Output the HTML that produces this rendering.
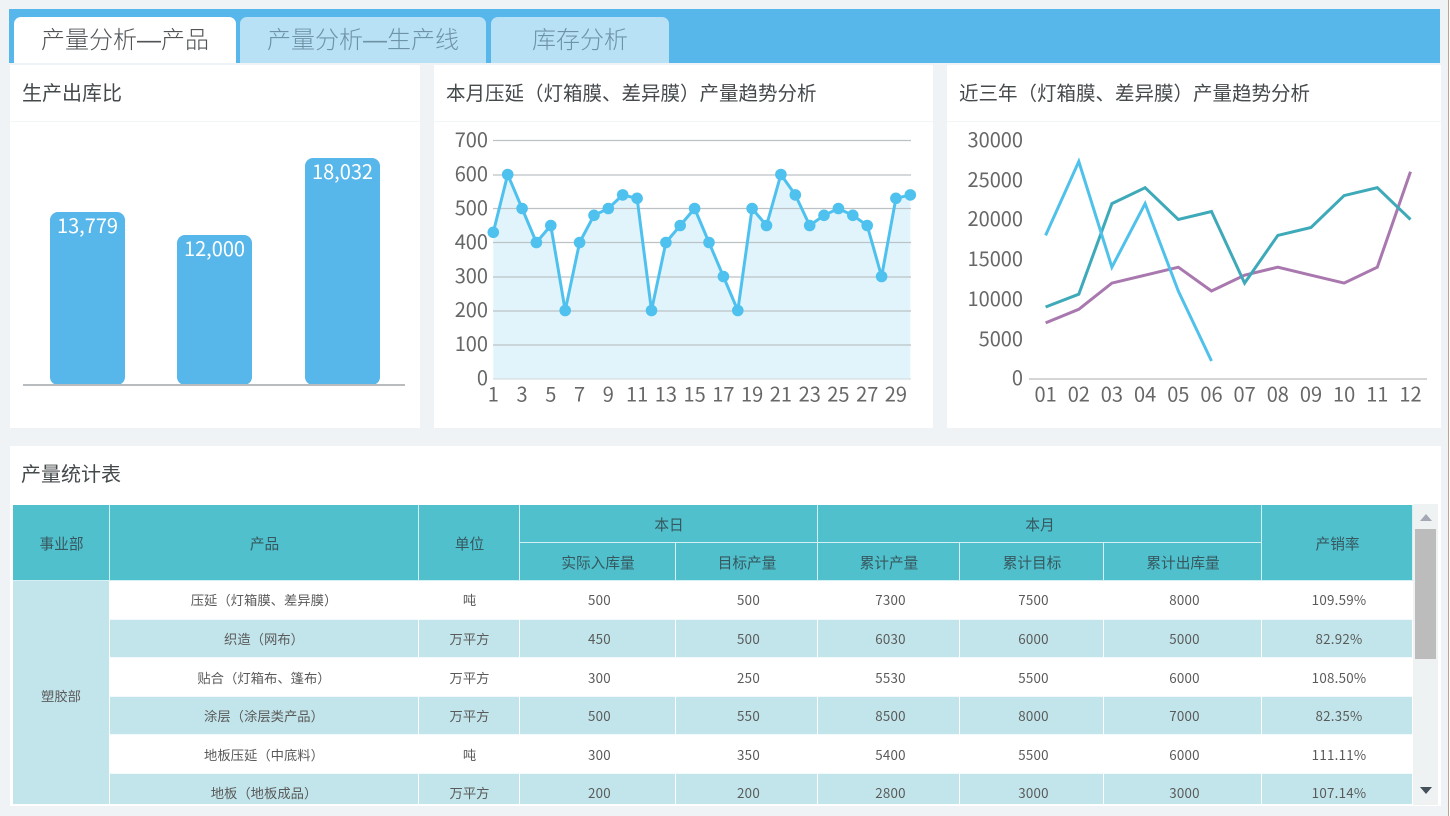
<!DOCTYPE html>
<html lang="zh-CN">
<head>
<meta charset="utf-8">
<title>产量分析</title>
<style>
html,body{margin:0;padding:0;background:#eff3f5;}
body{position:relative;width:1450px;height:816px;overflow:hidden;font-family:"Noto Sans CJK SC","Liberation Sans",sans-serif;color:#555;}
.a{position:absolute;}
.bar{left:9px;top:9px;width:1431px;height:54px;background:#58b7ea;}
.tab{top:17px;height:46px;line-height:47px;text-align:center;font-family:"Liberation Sans","Noto Sans CJK SC",sans-serif;font-size:24px;font-weight:300;border-radius:7px 7px 0 0;background:#b8e1f6;color:#6f93a6;overflow:hidden;}
.tab.on{background:#fff;color:#505457;}
.panel{background:#fff;}
.title{font-size:19.5px;line-height:28px;color:#44494c;white-space:nowrap;}
.sep{height:1px;background:#f3f6f7;}
.bk{background:#58b7ea;border-radius:8px;color:#fff;font-size:20px;line-height:26px;text-align:center;}
svg{position:absolute;left:0;top:0;}
svg text{font-family:"Noto Sans CJK SC","Liberation Sans",sans-serif;font-size:20px;fill:#666767;}
.wrap{left:13px;top:505px;width:1400px;height:299px;overflow:hidden;}
table{border-collapse:separate;border-spacing:0;table-layout:fixed;width:1400px;}
td,th{box-sizing:border-box;padding:0;text-align:center;vertical-align:middle;font-weight:normal;white-space:nowrap;border-right:1px solid #fff;border-bottom:1px solid #f2fafb;}
th{background:#4fc0cc;color:#37575e;font-size:14.67px;border-right:1px solid #d5f0f4;border-bottom:1px solid #d5f0f4;padding-left:1px;padding-top:1px;}
td{font-size:13.33px;color:#5a5a5a;background:#fff;padding-left:4px;letter-spacing:.25px;}
td.p{padding-left:0;letter-spacing:0;}
td.u{padding-left:1px;letter-spacing:0;}
tr.e td{background:#c2e5eb;}
td.d{background:#c2e5eb;padding-left:0;padding-bottom:2px;letter-spacing:0;}
tr.t td{padding-bottom:2px;}
tr.r1{height:38px;}tr.r2{height:38px;}
</style>
</head>
<body>
<div class="a" style="left:1448px;top:0;width:1px;height:816px;background:#c4a08e;"></div>
<div class="a" style="left:1449px;top:0;width:1px;height:816px;background:#fff;"></div>

<div class="a bar"></div>
<div class="a tab on" style="left:14px;width:222px;">产量分析—产品</div>
<div class="a tab" style="left:240px;width:246px;">产量分析—生产线</div>
<div class="a tab" style="left:491px;width:178px;">库存分析</div>

<div class="a panel" style="left:10px;top:65px;width:410px;height:363px;"></div>
<div class="a panel" style="left:434px;top:65px;width:499px;height:363px;"></div>
<div class="a panel" style="left:947px;top:65px;width:494px;height:363px;"></div>
<div class="a panel" style="left:10px;top:446px;width:1431px;height:360px;"></div>

<div class="a sep" style="left:10px;top:121px;width:410px;"></div>
<div class="a sep" style="left:434px;top:121px;width:499px;"></div>
<div class="a sep" style="left:947px;top:121px;width:494px;"></div>

<div class="a title" style="left:22px;top:78px;font-size:20px;">生产出库比</div>
<div class="a title" style="left:446px;top:78px;">本月压延（灯箱膜、差异膜）产量趋势分析</div>
<div class="a title" style="left:959px;top:78px;">近三年（灯箱膜、差异膜）产量趋势分析</div>
<div class="a title" style="left:21px;top:459px;font-size:20px;">产量统计表</div>

<div class="a bk" style="left:50px;top:212px;width:75px;height:173px;">13,779</div>
<div class="a bk" style="left:177px;top:235px;width:75px;height:150px;">12,000</div>
<div class="a bk" style="left:305px;top:158px;width:75px;height:227px;">18,032</div>
<div class="a" style="left:23px;top:384px;width:382px;height:2px;background:#b9bcbe;"></div>

<svg width="1450" height="816" viewBox="0 0 1450 816">
  <polygon fill="#e1f4fc" points="493.3,378.5 493.3,232.3 507.7,174.5 522.1,208.5 536.4,242.5 550.8,225.5 565.2,310.5 579.6,242.5 594,215.3 608.3,208.5 622.7,194.9 637.1,198.3 651.5,310.5 665.9,242.5 680.2,225.5 694.6,208.5 709,242.5 723.4,276.5 737.8,310.5 752.1,208.5 766.5,225.5 780.9,174.5 795.3,194.9 809.7,225.5 824,215.3 838.4,208.5 852.8,215.3 867.2,225.5 881.6,276.5 895.9,198.3 910.3,194.9 910.3,378.5"/>
  <g stroke="#bcc2c5" stroke-width="1.3">
    <line x1="493" x2="911" y1="140.5" y2="140.5"/>
    <line x1="493" x2="911" y1="175" y2="175"/>
    <line x1="493" x2="911" y1="208.5" y2="208.5"/>
    <line x1="493" x2="911" y1="242.5" y2="242.5"/>
    <line x1="493" x2="911" y1="277" y2="277"/>
    <line x1="493" x2="911" y1="311" y2="311"/>
    <line x1="493" x2="911" y1="345" y2="345"/>
    <line x1="493" x2="911" y1="379" y2="379" stroke="#d5dde0"/>
  </g>
  <polyline fill="none" stroke="#4fc1ee" stroke-width="3" stroke-linejoin="round" points="493.3,232.3 507.7,174.5 522.1,208.5 536.4,242.5 550.8,225.5 565.2,310.5 579.6,242.5 594,215.3 608.3,208.5 622.7,194.9 637.1,198.3 651.5,310.5 665.9,242.5 680.2,225.5 694.6,208.5 709,242.5 723.4,276.5 737.8,310.5 752.1,208.5 766.5,225.5 780.9,174.5 795.3,194.9 809.7,225.5 824,215.3 838.4,208.5 852.8,215.3 867.2,225.5 881.6,276.5 895.9,198.3 910.3,194.9"/>
  <g fill="#4fc1ee">
    <circle cx="493.3" cy="232.3" r="5.8"/><circle cx="507.7" cy="174.5" r="5.8"/><circle cx="522.1" cy="208.5" r="5.8"/><circle cx="536.4" cy="242.5" r="5.8"/><circle cx="550.8" cy="225.5" r="5.8"/><circle cx="565.2" cy="310.5" r="5.8"/><circle cx="579.6" cy="242.5" r="5.8"/><circle cx="594" cy="215.3" r="5.8"/><circle cx="608.3" cy="208.5" r="5.8"/><circle cx="622.7" cy="194.9" r="5.8"/><circle cx="637.1" cy="198.3" r="5.8"/><circle cx="651.5" cy="310.5" r="5.8"/><circle cx="665.9" cy="242.5" r="5.8"/><circle cx="680.2" cy="225.5" r="5.8"/><circle cx="694.6" cy="208.5" r="5.8"/><circle cx="709" cy="242.5" r="5.8"/><circle cx="723.4" cy="276.5" r="5.8"/><circle cx="737.8" cy="310.5" r="5.8"/><circle cx="752.1" cy="208.5" r="5.8"/><circle cx="766.5" cy="225.5" r="5.8"/><circle cx="780.9" cy="174.5" r="5.8"/><circle cx="795.3" cy="194.9" r="5.8"/><circle cx="809.7" cy="225.5" r="5.8"/><circle cx="824" cy="215.3" r="5.8"/><circle cx="838.4" cy="208.5" r="5.8"/><circle cx="852.8" cy="215.3" r="5.8"/><circle cx="867.2" cy="225.5" r="5.8"/><circle cx="881.6" cy="276.5" r="5.8"/><circle cx="895.9" cy="198.3" r="5.8"/><circle cx="910.3" cy="194.9" r="5.8"/>
  </g>
  <g text-anchor="end">
    <text x="488" y="147">700</text><text x="488" y="181">600</text><text x="488" y="215">500</text><text x="488" y="249">400</text><text x="488" y="283">300</text><text x="488" y="317">200</text><text x="488" y="351">100</text><text x="488" y="385">0</text>
  </g>
  <g text-anchor="middle">
    <text x="493.3" y="401.5">1</text><text x="522.1" y="401.5">3</text><text x="550.8" y="401.5">5</text><text x="579.6" y="401.5">7</text><text x="608.3" y="401.5">9</text><text x="637.1" y="401.5">11</text><text x="665.9" y="401.5">13</text><text x="694.6" y="401.5">15</text><text x="723.4" y="401.5">17</text><text x="752.1" y="401.5">19</text><text x="780.9" y="401.5">21</text><text x="809.7" y="401.5">23</text><text x="838.4" y="401.5">25</text><text x="867.2" y="401.5">27</text><text x="895.9" y="401.5">29</text>
  </g>

  <line x1="1029" x2="1427" y1="379" y2="379" stroke="#bbbdbe" stroke-width="1.3"/>
  <polyline fill="none" stroke="#a878ae" stroke-width="3" stroke-linejoin="miter" points="1045.6,322.9 1078.8,309.3 1111.9,283.1 1145.1,275.2 1178.3,267.2 1211.5,291 1244.6,275.2 1277.8,267.2 1311,275.2 1344.1,283.1 1377.3,267.2 1410.5,171.8"/>
  <polyline fill="none" stroke="#3eaab9" stroke-width="3" stroke-linejoin="miter" points="1045.6,307 1078.8,294.2 1111.9,203.6 1145.1,187.7 1178.3,219.5 1211.5,211.5 1244.6,283.1 1277.8,235.4 1311,227.5 1344.1,195.6 1377.3,187.7 1410.5,219.5"/>
  <polyline fill="none" stroke="#4fc1ea" stroke-width="3" stroke-linejoin="miter" points="1045.6,235.4 1078.8,161.5 1111.9,267.2 1145.1,203.6 1178.3,291 1211.5,361"/>
  <g text-anchor="end">
    <text x="1023" y="147">30000</text><text x="1023" y="187">25000</text><text x="1023" y="226">20000</text><text x="1023" y="266">15000</text><text x="1023" y="306">10000</text><text x="1023" y="346">5000</text><text x="1023" y="385">0</text>
  </g>
  <g text-anchor="middle">
    <text x="1045.6" y="401.5">01</text><text x="1078.8" y="401.5">02</text><text x="1111.9" y="401.5">03</text><text x="1145.1" y="401.5">04</text><text x="1178.3" y="401.5">05</text><text x="1211.5" y="401.5">06</text><text x="1244.6" y="401.5">07</text><text x="1277.8" y="401.5">08</text><text x="1311" y="401.5">09</text><text x="1344.1" y="401.5">10</text><text x="1377.3" y="401.5">11</text><text x="1410.5" y="401.5">12</text>
  </g>

  <rect x="1413" y="504" width="25" height="301" fill="#eff2f3"/>
  <rect x="1415" y="529" width="21" height="130" fill="#bcbcbc"/>
  <polygon points="1420,521 1432,521 1426,514" fill="#a4a8b4"/>
  <polygon points="1420,787 1432,787 1426,794" fill="#44505a"/>
</svg>

<div class="a wrap">
<table>
<colgroup><col style="width:97px"><col style="width:309px"><col style="width:101px"><col style="width:156px"><col style="width:142px"><col style="width:142px"><col style="width:144px"><col style="width:158px"><col style="width:151px"></colgroup>
<tr class="r1"><th rowspan="2">事业部</th><th rowspan="2">产品</th><th rowspan="2">单位</th><th colspan="2">本日</th><th colspan="3">本月</th><th rowspan="2">产销率</th></tr>
<tr class="r2"><th>实际入库量</th><th>目标产量</th><th>累计产量</th><th>累计目标</th><th>累计出库量</th></tr>
<tr class="t" style="height:39px"><td class="d" rowspan="6">塑胶部</td><td class="p">压延（灯箱膜、差异膜）</td><td class="u">吨</td><td>500</td><td>500</td><td>7300</td><td>7500</td><td>8000</td><td>109.59%</td></tr>
<tr class="e" style="height:38px"><td class="p">织造（网布）</td><td class="u">万平方</td><td>450</td><td>500</td><td>6030</td><td>6000</td><td>5000</td><td>82.92%</td></tr>
<tr style="height:39px"><td class="p">贴合（灯箱布、篷布）</td><td class="u">万平方</td><td>300</td><td>250</td><td>5530</td><td>5500</td><td>6000</td><td>108.50%</td></tr>
<tr class="e" style="height:38px"><td class="p">涂层（涂层类产品）</td><td class="u">万平方</td><td>500</td><td>550</td><td>8500</td><td>8000</td><td>7000</td><td>82.35%</td></tr>
<tr style="height:39px"><td class="p">地板压延（中底料）</td><td class="u">吨</td><td>300</td><td>350</td><td>5400</td><td>5500</td><td>6000</td><td>111.11%</td></tr>
<tr class="e t" style="height:39px"><td class="p">地板（地板成品）</td><td class="u">万平方</td><td>200</td><td>200</td><td>2800</td><td>3000</td><td>3000</td><td>107.14%</td></tr>
</table>
</div>
</body>
</html>
